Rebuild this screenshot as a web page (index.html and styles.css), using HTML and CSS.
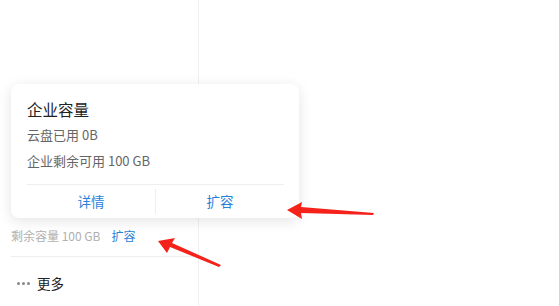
FILE: index.html
```html
<!DOCTYPE html>
<html lang="zh">
<head>
    <meta charset="UTF-8">
    <meta name="viewport" content="width=device-width, initial-scale=1.0">
    <title>企业容量</title>
    <link rel="stylesheet" href="styles.css">
</head>
<body>
    <div class="layout">
        <div class="sidebar">
            <div class="storage">
                <span class="storage-text">剩余容量 100 GB</span>
                <a class="link">扩容</a>
            </div>
            <div class="more">
                <span class="dots"><i></i><i></i><i></i></span>
                <span>更多</span>
            </div>
        </div>
        <div class="main"></div>
    </div>

    <div class="popover">
        <div class="pop-body">
            <h3>企业容量</h3>
            <p>云盘已用 0B</p>
            <p>企业剩余可用 100 GB</p>
        </div>
        <div class="pop-actions">
            <a class="link">详情</a>
            <a class="link">扩容</a>
        </div>
    </div>

    <svg class="arrows" width="559" height="306" viewBox="0 0 559 306">
        <polygon points="287,210 302,202 301,207 374,213 373,215 301,213 302,219" fill="#f5221b"/>
        <polygon points="158,241 175,238 172,243 221,265 219,267 170,247 167,253" fill="#f5221b"/>
    </svg>
</body>
</html>
```

FILE: styles.css
```css
*{
    margin: 0;
    padding: 0;
    box-sizing: border-box;
}

body{
    font-family: "Noto Sans CJK SC", "Noto Sans", sans-serif;
    background: #fff;
    width: 559px;
    height: 306px;
    overflow: hidden;
    position: relative;
}

.layout{
    display: flex;
    height: 306px;
}

.sidebar{
    width: 199px;
    border-right: 1px solid #f0f0f0;
    padding-top: 226px;
}

.main{
    flex: 1;
}

.storage{
    height: 20px;
    line-height: 20px;
    padding-left: 11px;
    font-size: 12px;
    display: flex;
    gap: 11px;
    margin-bottom: 10px;
}

.storage-text{
    color: #b0b0b0;
}

.link{
    color: #2a82d8;
}

.more{
    margin-left: 11px;
    border-top: 1px solid #eee;
    padding: 16px 0 0 6px;
    display: flex;
    align-items: center;
    gap: 7px;
    font-size: 13.5px;
    line-height: 20px;
    color: #222;
}

.dots{
    display: flex;
    gap: 2px;
}

.dots i{
    width: 3px;
    height: 3px;
    border-radius: 50%;
    background: #888;
}

.popover{
    position: absolute;
    left: 11px;
    top: 84px;
    width: 288px;
    height: 134px;
    background: #fff;
    border-radius: 8px;
    box-shadow: 0 3px 14px rgba(0, 0, 0, 0.11);
    padding: 0 15px 0 16px;
}

.pop-body{
    padding-top: 14px;
    padding-bottom: 10px;
    border-bottom: 1px solid #eee;
}

.pop-body h3{
    font-size: 15.5px;
    font-weight: normal;
    line-height: 22px;
    color: #222;
    margin-bottom: 2px;
}

.pop-body p{
    font-size: 13px;
    line-height: 26px;
    color: #666;
}

.pop-actions{
    display: flex;
    height: 33px;
    align-items: center;
}

.pop-actions .link{
    flex: 1;
    text-align: center;
    font-size: 13.5px;
    line-height: 25px;
}

.pop-actions .link + .link{
    border-left: 1px solid #eee;
}

.arrows{
    position: absolute;
    left: 0;
    top: 0;
}
```
